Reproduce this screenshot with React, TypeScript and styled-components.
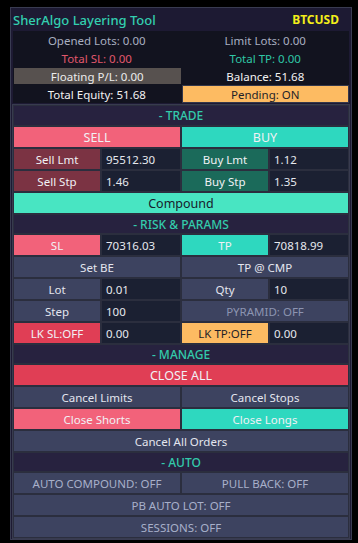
import React from "react";
import styled, { createGlobalStyle } from "styled-components";

const Global = createGlobalStyle`
  html, body { margin: 0; padding: 0; background: #000; }
  body { font-family: "Noto Sans", "Open Sans", sans-serif; }
  * { box-sizing: border-box; }
`;

const Panel = styled.div`
  margin: 7px 0 0 10px;
  width: 342px;
  background: #1d1a33;
  border: 1px solid #393b51;
  padding: 0 1px;
  display: flex;
  flex-direction: column;
`;

const TitleBar = styled.div`
  height: 23px;
  display: flex;
  align-items: center;
  justify-content: space-between;
  padding: 0 11px 0 1px;
`;

const Title = styled.span`
  color: #33cfb0;
  font-size: 13px;
  font-weight: 500;
`;

const Symbol = styled.span`
  color: #f4ee1a;
  font-size: 12px;
  font-weight: 700;
`;

const Info = styled.div`
  margin: 0 1px;
  background: #12131f;
  display: grid;
  grid-template-columns: 1fr 1fr;
  grid-auto-rows: 18px;
  column-gap: 1px;
`;

const InfoCell = styled.div<{ $color?: string; $bg?: string; $boxed?: boolean }>`
  display: flex;
  align-items: center;
  justify-content: center;
  font-size: 11.5px;
  color: ${(p) => p.$color || "#a9afc1"};
  background: ${(p) => p.$bg || "transparent"};
  ${(p) => (p.$boxed ? "border: 1px solid #34374a;" : "")}
  ${(p) => (p.$bg && !p.$boxed ? "margin: 1px 0 1px 1px;" : "")}
`;

const Sections = styled.div`
  margin-top: 1px;
  border: 1px solid #383b4f;
  background: #2b2e3e;
  padding: 1px;
  display: flex;
  flex-direction: column;
  gap: 2px;
`;

const SectionHeader = styled.div<{ $h?: number }>`
  height: ${(p) => p.$h || 18}px;
  background: #27223f;
  color: #33cbab;
  font-size: 12px;
  font-weight: 500;
  display: flex;
  align-items: center;
  justify-content: center;
`;

const Row = styled.div`
  display: grid;
  grid-template-columns: 1fr 1fr;
  gap: 2px;
  height: 20px;
`;

const Half = styled.div`
  display: grid;
  grid-template-columns: 86px 1fr;
  gap: 2px;
`;

const Btn = styled.div<{ $bg: string; $color?: string; $size?: number }>`
  background: ${(p) => p.$bg};
  color: ${(p) => p.$color || "#f1f1f5"};
  font-size: ${(p) => p.$size || 11.5}px;
  display: flex;
  align-items: center;
  justify-content: center;
  height: 20px;
  white-space: nowrap;
`;

const Input = styled.div`
  background: #1b2032;
  color: #e6e8ee;
  font-size: 11.5px;
  display: flex;
  align-items: center;
  padding-left: 4px;
  height: 20px;
`;

const C = {
  pink: "#f2627a",
  teal: "#2ed8bf",
  mint: "#48e5c2",
  darkRed: "#7b3343",
  darkGreen: "#1b6a5a",
  slate: "#3d4360",
  red: "#e03e55",
  orange: "#fdbb62",
};

const Pair = ({ label, bg, value, color }: { label: string; bg: string; value: string; color?: string }) => (
  <Half>
    <Btn $bg={bg} $color={color}>{label}</Btn>
    <Input>{value}</Input>
  </Half>
);

export default function App() {
  return (
    <>
      <Global />
      <Panel>
        <TitleBar>
          <Title>SherAlgo Layering Tool</Title>
          <Symbol>BTCUSD</Symbol>
        </TitleBar>
        <Info>
          <InfoCell>Opened Lots: 0.00</InfoCell>
          <InfoCell>Limit Lots: 0.00</InfoCell>
          <InfoCell $color="#e0576c">Total SL: 0.00</InfoCell>
          <InfoCell $color="#2fc6a6">Total TP: 0.00</InfoCell>
          <InfoCell $color="#ececec" $bg="#57514f">Floating P/L: 0.00</InfoCell>
          <InfoCell $color="#f2f2f2">Balance: 51.68</InfoCell>
          <InfoCell $color="#f2f2f2">Total Equity: 51.68</InfoCell>
          <InfoCell $color="#1f1f28" $bg={C.orange} $boxed>Pending: ON</InfoCell>
        </Info>
        <Sections>
          <SectionHeader $h={19}>- TRADE</SectionHeader>
          <Row>
            <Btn $bg={C.pink} $size={12.5}>SELL</Btn>
            <Btn $bg={C.teal} $size={12.5}>BUY</Btn>
          </Row>
          <Row>
            <Pair label="Sell Lmt" bg={C.darkRed} value="95512.30" />
            <Pair label="Buy Lmt" bg={C.darkGreen} value="1.12" />
          </Row>
          <Row>
            <Pair label="Sell Stp" bg={C.darkRed} value="1.46" />
            <Pair label="Buy Stp" bg={C.darkGreen} value="1.35" />
          </Row>
          <Btn $bg={C.mint} $color="#17202c" $size={12.5}>Compound</Btn>

          <SectionHeader>- RISK &amp; PARAMS</SectionHeader>
          <Row>
            <Pair label="SL" bg={C.pink} value="70316.03" />
            <Pair label="TP" bg={C.teal} value="70818.99" />
          </Row>
          <Row>
            <Btn $bg={C.slate} $color="#e4e6ef">Set BE</Btn>
            <Btn $bg={C.slate} $color="#e4e6ef">TP @ CMP</Btn>
          </Row>
          <Row>
            <Pair label="Lot" bg={C.slate} value="0.01" color="#e4e6ef" />
            <Pair label="Qty" bg={C.slate} value="10" color="#e4e6ef" />
          </Row>
          <Row>
            <Pair label="Step" bg={C.slate} value="100" color="#e4e6ef" />
            <Btn $bg={C.slate} $color="#8c94b1">PYRAMID: OFF</Btn>
          </Row>
          <Row>
            <Pair label="LK SL:OFF" bg={C.red} value="0.00" />
            <Pair label="LK TP:OFF" bg={C.orange} value="0.00" color="#1f1f28" />
          </Row>

          <SectionHeader>- MANAGE</SectionHeader>
          <Btn $bg={C.red} $size={12.5}>CLOSE ALL</Btn>
          <Row>
            <Btn $bg={C.slate} $color="#e4e6ef">Cancel Limits</Btn>
            <Btn $bg={C.slate} $color="#e4e6ef">Cancel Stops</Btn>
          </Row>
          <Row>
            <Btn $bg={C.pink}>Close Shorts</Btn>
            <Btn $bg={C.teal}>Close Longs</Btn>
          </Row>
          <Btn $bg={C.slate} $color="#e4e6ef">Cancel All Orders</Btn>

          <SectionHeader>- AUTO</SectionHeader>
          <Row>
            <Btn $bg={C.slate} $color="#a8b0ca">AUTO COMPOUND: OFF</Btn>
            <Btn $bg={C.slate} $color="#a8b0ca">PULL BACK: OFF</Btn>
          </Row>
          <Btn $bg={C.slate} $color="#a8b0ca">PB AUTO LOT: OFF</Btn>
          <Btn $bg={C.slate} $color="#a8b0ca">SESSIONS: OFF</Btn>
        </Sections>
      </Panel>
    </>
  );
}
